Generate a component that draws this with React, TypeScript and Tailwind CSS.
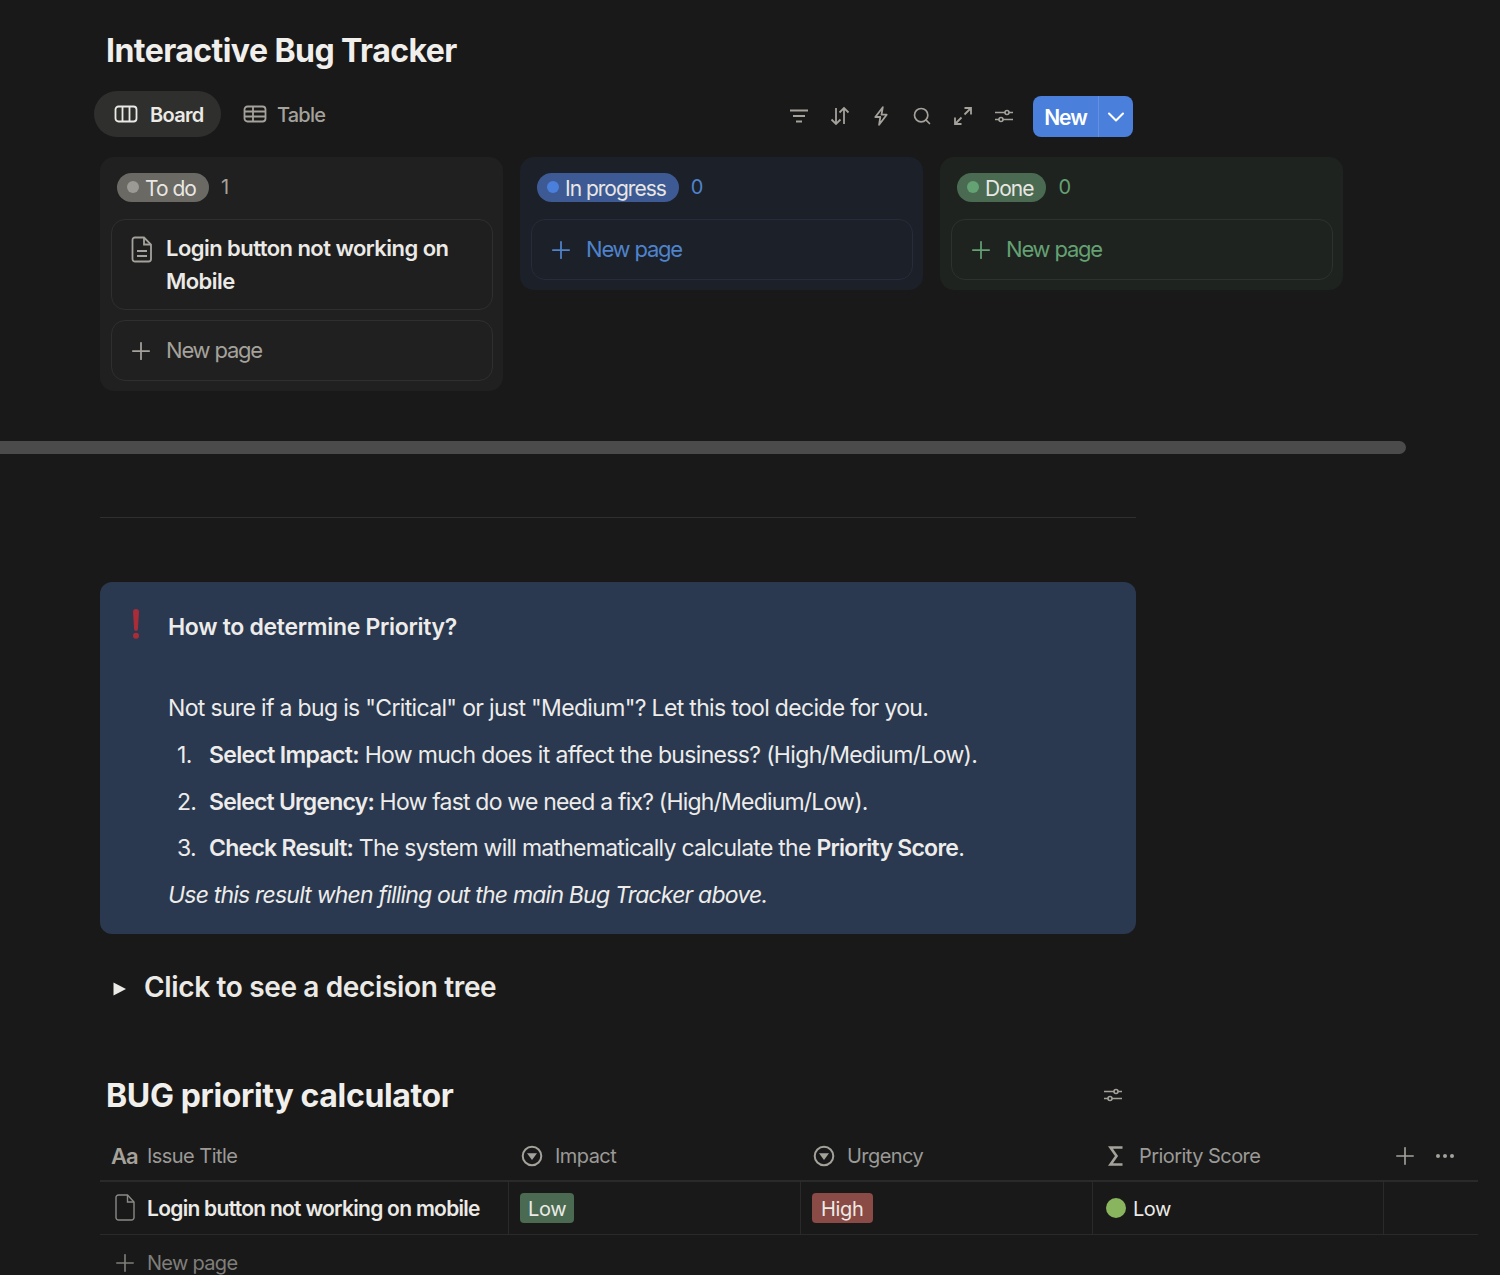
import { ChevronDown, Plus, Search } from 'lucide-react';

const font = { fontFamily: 'Inter, "Noto Sans", sans-serif' };

function Sliders({ className }: { className?: string }) {
  return (
    <svg viewBox="0 0 20 20" fill="none" stroke="currentColor" strokeWidth="1.6" className={className}>
      <path d="M1 6.5h10M15 6.5h4M1 13.5h4M9 13.5h10" />
      <circle cx="13" cy="6.5" r="2" />
      <circle cx="7" cy="13.5" r="2" />
    </svg>
  );
}

function ToolbarIcons() {
  return (
    <div className="flex items-center gap-[21px] mt-[3px] text-[#a5a29c]">
      <svg viewBox="0 0 20 20" fill="none" stroke="currentColor" strokeWidth="1.9" className="w-5 h-5">
        <path d="M1 4.5h18M4 10h12M7 15.5h6" />
      </svg>
      <svg viewBox="0 0 20 20" fill="none" stroke="currentColor" strokeWidth="1.8" className="w-5 h-5">
        <path d="M6 2v16M1.5 13.5L6 18l4.5-4.5M14 18V2M9.5 6.5L14 2l4.5 4.5" />
      </svg>
      <svg viewBox="0 0 20 20" fill="none" stroke="currentColor" strokeWidth="1.8" strokeLinejoin="round" className="w-5 h-5">
        <path d="M11.8 1.2L4.3 11h5l-1.2 7.8L15.7 8.7h-5.2z" />
      </svg>
      <Search className="w-5 h-5" strokeWidth={2} />
      <svg viewBox="0 0 20 20" fill="none" stroke="currentColor" strokeWidth="1.8" className="w-5 h-5">
        <path d="M2 18l6.5-6.5M2 11.5V18h6.5M18 2l-6.5 6.5M11.5 2H18v6.5" />
      </svg>
      <Sliders className="w-5 h-5" />
    </div>
  );
}

type ColumnProps = {
  label: string;
  count: number;
  bg: string;
  pill: string;
  dot: string;
  countColor: string;
  border: string;
  addColor: string;
  children?: React.ReactNode;
};

function NewPageCard({ border, addColor }: { border: string; addColor: string }) {
  return (
    <div className={`h-[61px] rounded-[14px] border ${border} flex items-center pl-[15px] ${addColor}`}>
      <Plus className="w-7 h-7" strokeWidth={1.5} />
      <span className="ml-[11px] text-[22px] tracking-[-1.2px]">New page</span>
    </div>
  );
}

function Column({ label, count, bg, pill, dot, countColor, border, addColor, children }: ColumnProps) {
  return (
    <div className={`w-[403px] rounded-[14px] ${bg} pl-[11px] pr-[10px] pt-[16px] pb-[10px] flex flex-col`}>
      <div className="flex items-center h-[29px] pl-[6px] mb-[17px]">
        <span className={`h-[29px] rounded-full ${pill} flex items-center pl-[10px] pr-[13px] text-[21px] tracking-[-1px] text-[#e9e7e3]`}>
          <span className={`w-3 h-3 rounded-full ${dot} mr-[6px] -mt-[2px]`} />
          <span className="mt-[3px]">{label}</span>
        </span>
        <span className={`ml-[12px] text-[20px] -mt-[2px] ${countColor}`}>{count}</span>
      </div>
      <div className="flex flex-col gap-[10px]">
        {children}
        <NewPageCard border={border} addColor={addColor} />
      </div>
    </div>
  );
}

function Step({ n, children }: { n: number; children: React.ReactNode }) {
  return (
    <div className="flex h-[46.7px] items-center pl-[9px]">
      <span className="w-[32px]">{n}.</span>
      <span>{children}</span>
    </div>
  );
}

function ColumnHead({ icon, label, width }: { icon: React.ReactNode; label: string; width: string }) {
  return (
    <div className={`${width} flex items-center text-[20px] tracking-[-0.55px] text-[#9b9a97]`}>
      {icon}
      {label}
    </div>
  );
}

function SelectIcon() {
  return (
    <span className="w-[34px] flex items-center">
      <svg viewBox="0 0 22 22" className="w-[22px] h-[22px]" fill="none">
        <circle cx="11" cy="11" r="9.3" stroke="#a5a29c" strokeWidth="2" />
        <path d="M6 8.2h10L11 15z" fill="#a5a29c" />
      </svg>
    </span>
  );
}

export default function App() {
  return (
    <div style={font} className="relative h-[1275px] w-[1500px] overflow-hidden bg-[#191919] text-[#ebeae6]">
      <div className="pl-[100px]">
        {/* Header */}
        <h1 className="pl-[6px] pt-[31px] h-[91px] text-[32px] leading-[40px] font-bold tracking-[-0.55px] text-[#f0efec]">
          Interactive Bug Tracker
        </h1>

        {/* View tabs and toolbar */}
        <div className="flex items-center h-[46px] w-[1039px] -ml-[6px]">
          <div className="h-[46px] w-[127px] rounded-full bg-[#2f2f2d] flex items-center pl-[20px] text-[#ebeae6]">
            <svg viewBox="0 0 24 20" fill="none" stroke="currentColor" strokeWidth="1.8" className="w-6 h-5 -mt-[1px]">
              <rect x="1.5" y="2.5" width="21" height="15" rx="3" />
              <path d="M8.5 2.5v15M15.5 2.5v15" />
            </svg>
            <span className="ml-[12px] mt-[1px] text-[20px] font-semibold tracking-[-0.7px]">Board</span>
          </div>
          <div className="flex items-center pl-[22px] text-[#a5a29c]">
            <svg viewBox="0 0 24 20" fill="none" stroke="currentColor" strokeWidth="1.8" className="w-6 h-5 -mt-[1px]">
              <rect x="1.5" y="2.5" width="21" height="15" rx="3" />
              <path d="M1.5 7.5h21M1.5 12.5h21M10 2.5v15" />
            </svg>
            <span className="ml-[10px] mt-[1px] text-[20px] font-medium tracking-[-0.8px]">Table</span>
          </div>
          <div className="ml-auto flex items-center">
            <ToolbarIcons />
            <div className="ml-[19px] mt-[5px] h-[41px] w-[100px] rounded-[8px] bg-[#4a7fdc] flex items-center text-white">
              <span className="w-[65px] mt-[2px] text-center text-[21px] font-semibold tracking-[-1px]">New</span>
              <span className="h-full w-[1px] bg-[#6391e0]" />
              <span className="flex-1 flex justify-center">
                <ChevronDown className="w-7 h-7" strokeWidth={1.8} />
              </span>
            </div>
          </div>
        </div>

        {/* Board */}
        <div className="flex items-start gap-[17px] mt-[20px]">
          <Column
            label="To do"
            count={1}
            bg="bg-[#202020]"
            pill="bg-[#6a6964]"
            dot="bg-[#9b9a95]"
            countColor="text-[#a5a29c]"
            border="border-[#2f2f2f]"
            addColor="text-[#a5a29c]"
          >
            <div className="h-[91px] rounded-[14px] border border-[#2f2f2f] bg-[#1f1f1f] flex pl-[19px] pt-[12px]">
              <svg viewBox="0 0 22 27" fill="none" stroke="#a5a29c" strokeWidth="1.8" className="w-[22px] h-[27px] mt-[4px] shrink-0">
                <path d="M4 1.5h9l7 7V23a2.5 2.5 0 0 1-2.5 2.5h-13A2.5 2.5 0 0 1 1.5 23V4A2.5 2.5 0 0 1 4 1.5z" />
                <path d="M13 1.5V8.5h7M6 15h10M6 20h10" />
              </svg>
              <div className="ml-[13px] text-[22px] leading-[33px] font-semibold tracking-[-0.55px] text-[#ebeae6]">
                Login button not working on
                <br />
                Mobile
              </div>
            </div>
          </Column>
          <Column
            label="In progress"
            count={0}
            bg="bg-[#1b2029]"
            pill="bg-[#3d5a94]"
            dot="bg-[#4a7fdc]"
            countColor="text-[#4f83cc]"
            border="border-[#252c3a]"
            addColor="text-[#4f83cc]"
          />
          <Column
            label="Done"
            count={0}
            bg="bg-[#1e231f]"
            pill="bg-[#4a6b52]"
            dot="bg-[#64a173]"
            countColor="text-[#64a173]"
            border="border-[#2a332c]"
            addColor="text-[#64a173]"
          />
        </div>
      </div>

      {/* Horizontal scrollbar */}
      <div className="mt-[50px] h-[13px] w-[1406px] rounded-r-full bg-[#4b4b4b]" />

      <div className="pl-[100px]">
        <div className="mt-[63px] h-[1px] w-[1036px] bg-[#2f2f2f]" />

        {/* Callout */}
        <div className="mt-[64px] h-[352px] w-[1036px] rounded-[12px] bg-[#2a3950] flex text-[23px] tracking-[-0.67px] text-[#edecea]">
          <div className="w-[68px] shrink-0 pl-[32px] pt-[27px]">
            <svg viewBox="0 0 8 30" className="w-2 h-[30px]">
              <path d="M1 2.8a3 2.8 0 0 1 6 0L5.9 20a1.9 1.9 0 0 1-3.8 0z" fill="#a92c38" />
              <circle cx="4" cy="26.8" r="3" fill="#a92c38" />
            </svg>
          </div>
          <div className="flex-1 pt-[22px]">
            <div className="h-[46px] flex items-center font-semibold tracking-[-0.3px]">How to determine Priority?</div>
            <div className="mt-[35px] h-[47px] flex items-center">
              Not sure if a bug is &quot;Critical&quot; or just &quot;Medium&quot;? Let this tool decide for you.
            </div>
            <Step n={1}>
              <b className="font-semibold">Select Impact:</b> How much does it affect the business? (High/Medium/Low).
            </Step>
            <Step n={2}>
              <span className="tracking-[-0.8px]">
                <b className="font-semibold">Select Urgency:</b> How fast do we need a fix? (High/Medium/Low).
              </span>
            </Step>
            <Step n={3}>
              <span className="tracking-[-0.74px]">
                <b className="font-semibold">Check Result:</b> The system will mathematically calculate the{' '}
                <b className="font-semibold">Priority Score</b>.
              </span>
            </Step>
            <div className="h-[46px] flex items-center italic tracking-[-0.8px]">Use this result when filling out the main Bug Tracker above.</div>
          </div>
        </div>

        {/* Toggle */}
        <div className="mt-[31px] h-[44px] flex items-center pl-[13px]">
          <svg viewBox="0 0 13 14" className="w-[13px] h-[14px] mt-[3px]">
            <path d="M0.5 0.5L13 7 0.5 13.5z" fill="#ebeae6" />
          </svg>
          <span className="ml-[18px] text-[28px] font-semibold tracking-[-0.35px] text-[#ebeae6]">Click to see a decision tree</span>
        </div>

        {/* Calculator */}
        <div className="mt-[67px] h-[40px] w-[1036px] flex items-center justify-between pl-[6px] pr-[2px]">
          <h2 className="text-[32px] font-bold tracking-[-0.35px] text-[#f0efec]">BUG priority calculator</h2>
          <Sliders className="w-5 h-5 text-[#a5a29c] mr-[11px] -mt-[2px]" />
        </div>

        <div className="mt-[16px] w-[1378px]">
          <div className="h-[50px] flex items-center border-b-2 border-[#2a2a2a]">
            <ColumnHead
              width="w-[409px] pl-[11px]"
              label="Issue Title"
              icon={<span className="w-[36px] text-[22px] font-semibold tracking-[-1px] text-[#a5a29c]">Aa</span>}
            />
            <ColumnHead width="w-[292px] pl-[12px]" label="Impact" icon={<SelectIcon />} />
            <ColumnHead width="w-[292px] pl-[12px]" label="Urgency" icon={<SelectIcon />} />
            <ColumnHead
              width="w-[290px] pl-[15px]"
              label="Priority Score"
              icon={
                <span className="w-[31px] flex items-center">
                  <svg viewBox="0 0 15 20" fill="none" stroke="#a5a29c" strokeWidth="2.6" className="w-[15px] h-5 -mt-[1px]">
                    <path d="M14.5 1.5H2.5L8.5 10 2.5 18.5h12" />
                  </svg>
                </span>
              }
            />
            <div className="flex items-center pl-[8px] text-[#a5a29c]">
              <Plus className="w-7 h-7" strokeWidth={1.4} />
              <span className="ml-[17px] flex gap-[3px]">
                <span className="w-[4px] h-[4px] rounded-full bg-current" />
                <span className="w-[4px] h-[4px] rounded-full bg-current" />
                <span className="w-[4px] h-[4px] rounded-full bg-current" />
              </span>
            </div>
          </div>
          <div className="h-[53px] flex items-stretch border-b border-[#2a2a2a]">
            <div className="w-[409px] flex items-center pl-[15px] border-r border-[#2a2a2a]">
              <svg viewBox="0 0 20 27" fill="none" stroke="#8a8985" strokeWidth="1.4" className="w-5 h-[27px] shrink-0 -mt-[2px]">
                <path d="M3.5 1h9l6.5 7v15.5A2.5 2.5 0 0 1 16.5 26h-13A2.5 2.5 0 0 1 1 23.5v-20A2.5 2.5 0 0 1 3.5 1z" />
                <path d="M12.5 1v7H19" />
              </svg>
              <span className="ml-[12px] mt-[2px] text-[21px] font-semibold tracking-[-0.72px] text-[#ebeae6]">Login button not working on mobile</span>
            </div>
            <div className="w-[292px] flex items-center pl-[11px] border-r border-[#2a2a2a]">
              <span className="h-[30px] px-[8px] pt-[2px] rounded-[4px] bg-[#4a6b52] flex items-center text-[20px] tracking-[-0.4px] text-[#ebeae6]">Low</span>
            </div>
            <div className="w-[292px] flex items-center pl-[11px] border-r border-[#2a2a2a]">
              <span className="h-[30px] px-[9px] pt-[2px] rounded-[4px] bg-[#8a4a45] flex items-center text-[20px] tracking-[-0.3px] text-[#ebeae6]">High</span>
            </div>
            <div className="w-[291px] flex items-center pl-[13px] border-r border-[#2a2a2a]">
              <span className="w-[20px] h-[20px] rounded-full bg-[#88b55e]" />
              <span className="ml-[7px] mt-[2px] text-[20px] tracking-[-0.5px] text-[#ebeae6]">Low</span>
            </div>
          </div>
          <div className="flex items-center h-[56px] pl-[11px] text-[#7f7e7a]">
            <Plus className="w-7 h-7" strokeWidth={1.4} />
            <span className="ml-[8px] text-[20px] leading-[24px] tracking-[-0.7px]">New page</span>
          </div>
        </div>
      </div>
    </div>
  );
}
